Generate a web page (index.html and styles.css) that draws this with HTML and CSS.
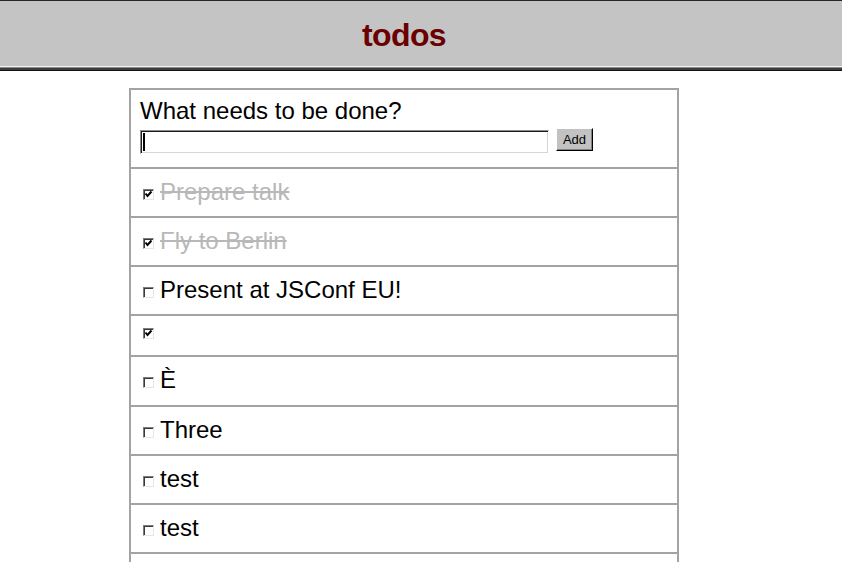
FILE: index.html
```html
<!DOCTYPE html>
<html lang="en">
<head>
<meta charset="utf-8">
<title>todos</title>
<link rel="stylesheet" href="styles.css">
</head>
<body>
<header class="masthead">
  <div class="wrap"><h1 class="title">todos</h1></div>
</header>
<div class="rule"></div>
<main class="wrap board">
  <form class="new-todo">
    <label class="prompt" for="new-item">What needs to be done?</label>
    <div class="entry">
      <span class="field"><input id="new-item" class="field-input" type="text"><span class="caret"></span></span>
      <button class="add" type="button">Add</button>
    </div>
  </form>
  <ul class="todos">
    <li class="todo done"><span class="box"><svg viewBox="0 0 9 9" width="9" height="9"><polyline points="1.5,3.5 3.5,6 7.5,1.5" fill="none" stroke="#000" stroke-width="2"/></svg></span><span class="text">Prepare talk</span></li>
    <li class="todo done"><span class="box"><svg viewBox="0 0 9 9" width="9" height="9"><polyline points="1.5,3.5 3.5,6 7.5,1.5" fill="none" stroke="#000" stroke-width="2"/></svg></span><span class="text">Fly to Berlin</span></li>
    <li class="todo"><span class="box"></span><span class="text">Present at JSConf EU!</span></li>
    <li class="todo blank"><span class="box"><svg viewBox="0 0 9 9" width="9" height="9"><polyline points="1.5,3.5 3.5,6 7.5,1.5" fill="none" stroke="#000" stroke-width="2"/></svg></span></li>
    <li class="todo accent"><span class="box"></span><span class="text">È</span></li>
    <li class="todo"><span class="box"></span><span class="text">Three</span></li>
    <li class="todo"><span class="box"></span><span class="text">test</span></li>
    <li class="todo"><span class="box"></span><span class="text">test</span></li>
    <li class="todo blank"><span class="box"></span></li>
  </ul>
</main>
</body>
</html>
```

FILE: styles.css
```css
html, body {
  margin: 0;
  padding: 0;
  background: #ffffff;
  font-family: "Liberation Sans", Arial, sans-serif;
  color: #000;
  overflow: hidden;
}

.wrap {
  width: 550px;
  margin-left: 129px;
  box-sizing: border-box;
}

.masthead {
  background: #c4c4c4;
  border-top: 1px solid #262626;
  padding: 16px 0 12px;
}

.title {
  margin: 0;
  text-align: center;
  font-size: 32px;
  line-height: 37px;
  font-weight: bold;
  letter-spacing: -0.6px;
  color: #6a0000;
}

.rule {
  height: 4px;
  border-top: 1px solid #f2f2f2;
  background: linear-gradient(#8a8a8a 0, #8a8a8a 1px, #3c3c3c 1px, #3c3c3c 3px, #141414 3px);
}

.board {
  margin-top: 17px;
  border: 2px solid #a3a3a3;
  border-bottom: none;
}

.new-todo {
  padding: 7px 10px 13px 9px;
}

.prompt {
  display: block;
  font-size: 24px;
  line-height: 28px;
}

.entry {
  display: flex;
  align-items: flex-start;
  gap: 7px;
  margin-top: 5px;
}

.field {
  position: relative;
  display: block;
}

.field-input {
  display: block;
  box-sizing: border-box;
  width: 409px;
  height: 24px;
  margin: 0;
  padding: 0 4px;
  border: 1px solid;
  border-color: #8a8a8a #ffffff #ffffff #8a8a8a;
  box-shadow: inset 1px 1px 0 #1e1e1e, inset -1px -1px 0 #d6d6d6;
  background: #fff;
  font: 13px "Liberation Sans", Arial, sans-serif;
  outline: none;
}

.caret {
  position: absolute;
  left: 3px;
  top: 3px;
  width: 2px;
  height: 18px;
  background: #000;
}

.add {
  box-sizing: border-box;
  width: 37px;
  height: 23px;
  margin: -2px 0 0;
  padding: 0;
  background: #c2c2c2;
  border: 1px solid;
  border-color: #ffffff #000000 #000000 #ffffff;
  box-shadow: inset -1px -1px 0 #808080;
  font: 13px "Liberation Sans", Arial, sans-serif;
  color: #000;
}

.todos {
  list-style: none;
  margin: 0;
  padding: 0;
}

.todo {
  border-top: 2px solid #a3a3a3;
  padding: 9px 0 10px 12px;
  font-size: 24px;
  line-height: 28px;
}

.todo.accent {
  padding-bottom: 11px;
}

.todo.blank {
  padding: 12px 0 16px 12px;
  line-height: 0;
}

.box {
  display: inline-block;
  box-sizing: border-box;
  width: 11px;
  height: 11px;
  margin-right: 6px;
  border: 1px solid;
  border-color: #7c7c7c #e6e6e6 #e6e6e6 #7c7c7c;
  box-shadow: inset 1px 1px 0 #3a3a3a;
  background: #fff;
  vertical-align: baseline;
}

.blank .box {
  display: block;
}

.box svg {
  display: block;
}

.done .text {
  color: #b8b8b8;
  text-decoration: line-through;
}
```
